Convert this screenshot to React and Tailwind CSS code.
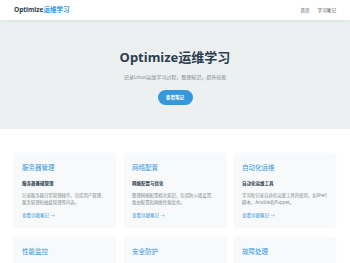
import React from "react";

const cards = [
  { t: "服务器管理", s: "服务器基础管理", d: "记录服务器日常管理操作，包括用户管理、服务管理和磁盘管理等内容。" },
  { t: "网络配置", s: "网络配置与优化", d: "整理网络配置相关知识，包括防火墙设置、路由配置和网络性能优化。" },
  { t: "自动化运维", s: "自动化运维工具", d: "学习和记录自动化运维工具的使用，如Shell脚本、Ansible和Puppet。" },
  { t: "性能监控", s: "系统性能监控", d: "记录系统性能监控工具的使用方法和性能分析技巧。" },
  { t: "安全防护", s: "系统安全防护", d: "整理系统安全加固措施和常见安全问题的处理方法。" },
  { t: "故障处理", s: "常见故障处理", d: "记录常见故障的排查思路和解决方法。" },
];

export default function App() {
  return (
    <div className="min-h-screen bg-white" style={{ fontFamily: '"Noto Sans", "Noto Sans CJK SC", sans-serif' }}>
      <header className="relative z-10 flex h-[20px] items-center justify-between bg-white px-[14px] shadow-[0_1px_3px_rgba(0,0,0,0.08)]">
        <div className="text-[6.5px] font-bold leading-none text-[#2c3e50]">
          Optimize<span className="text-[#3498db]">运维学习</span>
        </div>
        <nav className="flex gap-[8px] text-[4.6px] leading-none text-[#555]">
          <span>首页</span>
          <span>学习笔记</span>
        </nav>
      </header>
      <section className="flex h-[109px] flex-col items-center bg-[#ecf0f1] pt-[29px]">
        <h1 className="text-[13px] font-bold leading-[16px] text-[#2c3e50]">Optimize运维学习</h1>
        <p className="mt-[8px] text-[5px] leading-[8px] text-[#7f8c8d]">记录Linux运维学习过程，整理知识，提升技能</p>
        <button className="mt-[9px] flex h-[15px] w-[35px] items-center justify-center rounded-full bg-[#3498db] text-[4.6px] font-bold leading-none text-white">
          查看笔记
        </button>
      </section>
      <main className="grid grid-cols-3 gap-x-[8px] gap-y-[8.5px] px-[14px] pt-[24px]">
        {cards.map((c) => (
          <div key={c.t} className="rounded-[3px] bg-[#f8f9fa] px-[8px] pb-[9px] pt-[10px] shadow-[0_0_2px_rgba(0,0,0,0.04)]">
            <h2 className="text-[6.5px] leading-[10px] text-[#3498db]">{c.t}</h2>
            <h3 className="mt-[7px] text-[4.5px] font-bold leading-[7px] text-[#2c3e50]">{c.s}</h3>
            <p className="mt-[5px] text-[4.4px] leading-[7.3px] text-[#7f8c8d]">{c.d}</p>
            <a className="mt-[5.5px] block text-[4.5px] leading-[7px] text-[#3498db]">查看详细笔记 →</a>
          </div>
        ))}
      </main>
    </div>
  );
}
